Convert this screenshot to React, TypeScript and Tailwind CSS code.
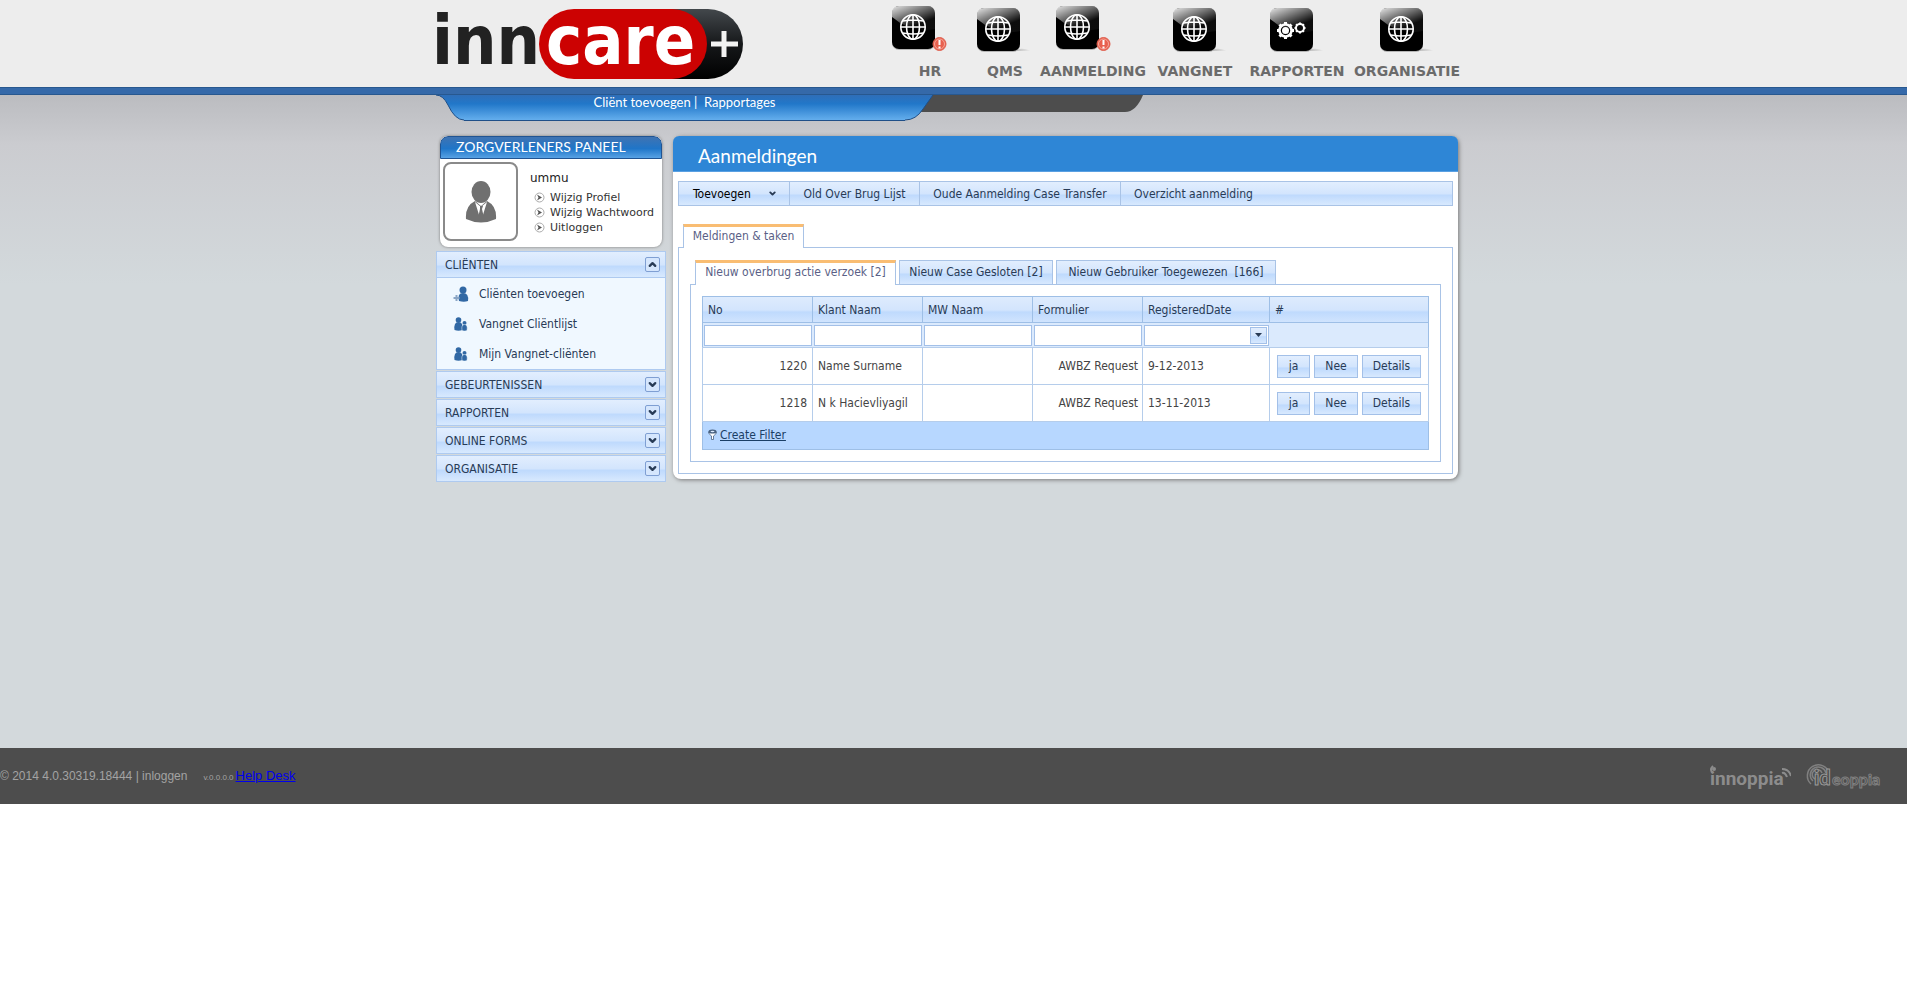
import React from "react";
import { ChevronDown, ChevronUp } from "lucide-react";

const navItems = [
  { label: "HR", icon: "globe", alert: true, width: "w-[80px]", pad: "pl-0.5" },
  { label: "QMS", icon: "globe", alert: false, width: "w-[70px]", pad: "pl-[7px]" },
  { label: "AANMELDING", icon: "globe", alert: true, width: "w-[106px]", pad: "pl-4" },
  { label: "VANGNET", icon: "globe", alert: false, width: "w-[98px]", pad: "pl-[27px]" },
  { label: "RAPPORTEN", icon: "gears", alert: false, width: "w-[106px]", pad: "pl-[26px]" },
  { label: "ORGANISATIE", icon: "globe", alert: false, width: "w-[114px]", pad: "pl-[30px]" },
];

const clientLinks = [
  { label: "Cliënten toevoegen", icon: "add" },
  { label: "Vangnet Cliëntlijst", icon: "group" },
  { label: "Mijn Vangnet-cliënten", icon: "group" },
];

const closedSections = ["GEBEURTENISSEN", "RAPPORTEN", "ONLINE FORMS", "ORGANISATIE"];

const columns = ["No", "Klant Naam", "MW Naam", "Formulier"];

const rows = [
  { no: "1220", klant: "Name Surname", mw: "", form: "AWBZ Request", date: "9-12-2013" },
  { no: "1218", klant: "N k Hacievliyagil", mw: "", form: "AWBZ Request", date: "13-11-2013" },
];

const glossy =
  "bg-[linear-gradient(to_bottom,#e2eefe_0%,#d3e5fd_50%,#bfdafd_58%,#d8e9fe_100%)]";

const Logo = () => (
  <svg width="318" height="84" viewBox="-8 0 318 84" className="-ml-2 shrink-0" role="img" aria-label="inncare+">
    <defs>
      <linearGradient id="pill" x1="0" y1="0" x2="0" y2="1">
        <stop offset="0" stopColor="#43484c" />
        <stop offset="0.5" stopColor="#16181a" />
        <stop offset="1" stopColor="#000" />
      </linearGradient>
    </defs>
    <rect x="160" y="9" width="147" height="70" rx="35" fill="url(#pill)" />
    <rect x="103" y="9" width="168" height="70" rx="35" fill="#cc0202" />
    <text x="-4" y="64" fontFamily="DejaVu Sans Condensed, sans-serif" fontWeight="700" fontSize="68" fill="#222">
      inn
    </text>
    <text x="110" y="64" fontFamily="DejaVu Sans Condensed, sans-serif" fontWeight="700" fontSize="68" fill="#fff">
      care
    </text>
    <path d="M288 31v26M275 44h27" stroke="#f2f2f2" strokeWidth="5" />
  </svg>
);

const gearTeeth = [0, 45, 90, 135];

const NavIcon = ({ kind, alert }: { kind: string; alert: boolean }) => (
  <svg width="56" height="46" viewBox="0 0 56 46" aria-hidden="true">
    <defs>
      <linearGradient id="gloss" x1="0" y1="0" x2="0.7" y2="1">
        <stop offset="0" stopColor="#fff" stopOpacity="0.9" />
        <stop offset="0.8" stopColor="#fff" stopOpacity="0.05" />
      </linearGradient>
      <linearGradient id="shade" x1="0" y1="0" x2="1" y2="0">
        <stop offset="0" stopColor="#999" stopOpacity="0.7" />
        <stop offset="1" stopColor="#999" stopOpacity="0" />
      </linearGradient>
    </defs>
    {!alert && <path d="M36 43h18q-6-3-12-2z" fill="url(#shade)" />}
    <rect x="0" y="1" width="43" height="43" rx="7" fill="#b5b5b5" />
    <rect x="0" y="0" width="43" height="43" rx="7" fill="#000" />
    <path d="M0 11V7q0-7 7-7h29q7 0 7 7v16Q20 28 0 11z" fill="url(#gloss)" />
    {kind === "globe" ? (
      <g fill="none" stroke="#fff" strokeWidth="1.6">
        <circle cx="21" cy="21" r="12.2" />
        <ellipse cx="21" cy="21" rx="6.5" ry="12.2" />
        <path d="M21 9v24M9 21h24M11 15q10-2 20 0M11 27q10 2 20 0" />
      </g>
    ) : (
      <g fill="none" stroke="#fff">
        <circle cx="15.500" cy="22.500" r="6" strokeWidth="2.500" />
        <circle cx="15.500" cy="22.500" r="3.500" fill="#fff" stroke="none" />
        {gearTeeth.map((a) => (
          <path key={a} d="M15.500 14v3M15.500 28v3" strokeWidth="3" transform={`rotate(${a} 15.500 22.500)`} />
        ))}
        <circle cx="30" cy="20" r="4" strokeWidth="2" />
        {gearTeeth.map((a) => (
          <path key={a} d="M30 14.500v2M30 23.500v2" strokeWidth="2" transform={`rotate(${a} 30 20)`} />
        ))}
      </g>
    )}
    {alert && (
      <g>
        <circle cx="47.500" cy="38" r="6.500" fill="#e8614f" stroke="#e0604f" />
        <circle cx="47.500" cy="38" r="5" fill="none" stroke="#f6a79b" />
        <path d="M47.500 34v5M47.500 40.500v2" stroke="#fff" strokeWidth="2" />
      </g>
    )}
  </svg>
);

const PersonIcon = ({ kind }: { kind: string }) =>
  kind === "add" ? (
    <svg width="17" height="17" viewBox="0 0 17 17" aria-hidden="true">
      <circle cx="10" cy="4" r="3.500" fill="#3168a4" />
      <path d="M6 15q-2-8 4-8t5 8q-4 1.500-9 0z" fill="#3168a4" />
      <path d="M3.500 9v6M0.500 12h6" stroke="#8aa5c5" strokeWidth="2" />
    </svg>
  ) : (
    <svg width="17" height="17" viewBox="0 0 17 17" aria-hidden="true">
      <circle cx="5.500" cy="4" r="2.800" fill="#3168a4" />
      <path d="M1.500 14q-1-8 4-8t4 8q-4 1.500-8 0z" fill="#3168a4" />
      <circle cx="11.500" cy="7" r="2" fill="#3168a4" />
      <path d="M9 14.500q-1-6 2.500-6t2.500 6q-2.500 1-5 0z" fill="#3168a4" stroke="#f0f8ff" strokeWidth="0.500" />
    </svg>
  );

const Avatar = () => (
  <svg width="32" height="42" viewBox="0 0 32 42" aria-hidden="true">
    <ellipse cx="16" cy="11" rx="9.500" ry="11" fill="#707070" />
    <path d="M1 38q-1-13 9-18l6 5 6-5q10 5 9 18-15 7-30 0z" fill="#707070" />
    <path d="M10 21l5 16 1-11 1 11 5-16-6 5z" fill="#fff" />
    <path d="M15 25h3l-1 3 2 9-3 3-3-3 2-9z" fill="#707070" />
  </svg>
);

const UserLink = ({ label }: { label: string }) => (
  <a href="#" className="flex h-[15px] items-center gap-[5px] text-[11px] text-[#333]">
    <svg width="11" height="11" viewBox="0 0 11 11" aria-hidden="true">
      <circle cx="5.500" cy="5.500" r="4.500" fill="#fff" stroke="#aaa" />
      <path d="M3 2.500l5 3-5 3 1.500-3z" fill="#555" />
    </svg>
    {label}
  </a>
);

const Header = () => (
  <header>
    <div className="h-[87px] bg-[#ededed]">
      <div className="mx-auto flex w-full max-w-[1035px] justify-between pr-[7px]">
        <Logo />
        <nav className="flex pt-1.5 font-['DejaVu_Sans',sans-serif]">
          {navItems.map((item) => (
            <a key={item.label} href="#" className={`${item.width} flex shrink-0 flex-col whitespace-nowrap`}>
              <span className={`${item.pad} ${item.alert ? "" : "pt-0.5"} flex h-[55px]`}>
                <NavIcon kind={item.icon} alert={item.alert} />
              </span>
              <span className="text-center text-sm leading-5 font-bold text-[#6b6b6b]">{item.label}</span>
            </a>
          ))}
        </nav>
      </div>
    </div>
    <div className="h-2 border-y border-[#28588f] bg-[#3569a9]" />
  </header>
);

const SubNav = () => (
  <div className="mx-auto flex w-full max-w-[1035px] items-start">
    <svg width="28" height="26" viewBox="0 0 28 26" className="shrink-0" aria-hidden="true">
      <defs>
        <linearGradient id="tab" x1="0" y1="0" x2="0" y2="1">
          <stop offset="0" stopColor="#2f6eb8" />
          <stop offset="0.35" stopColor="#2177c9" />
          <stop offset="1" stopColor="#64aeed" />
        </linearGradient>
      </defs>
      <path d="M0 0Q7 0 12 10Q19 25 28 25V0z" fill="url(#tab)" />
      <path d="M0 0Q7 0 12 10Q19 25 28 25" fill="none" stroke="#1f4f88" />
    </svg>
    <nav className="flex h-[26px] w-[441px] justify-center border-b border-[#1f4f88] bg-[linear-gradient(to_bottom,#2f6eb8_0%,#2177c9_35%,#64aeed_100%)] font-[Lato,sans-serif] text-[13px] leading-[14px] text-white">
      <a href="#">Cliënt toevoegen</a>
      <span className="whitespace-pre"> |  </span>
      <a href="#">Rapportages</a>
    </nav>
    <svg width="28" height="26" viewBox="0 0 28 26" className="shrink-0" aria-hidden="true">
      <path d="M14 0h14v17H14z" fill="#4d4d4d" />
      <path d="M0 0h28L18 14Q11 25 0 25z" fill="url(#tab)" />
      <path d="M28 0L18 14Q11 25 0 25" fill="none" stroke="#1f4f88" />
    </svg>
    <div className="h-[17px] w-[190px] bg-[#4d4d4d]" />
    <svg width="20" height="17" viewBox="0 0 20 17" aria-hidden="true">
      <path d="M0 0h20Q13 17 2 17H0z" fill="#4d4d4d" />
    </svg>
  </div>
);

const SectionHeader = ({ title, open }: { title: string; open?: boolean }) => (
  <button
    type="button"
    className={`flex h-[27px] w-full items-center justify-between border border-[#aecaf0] pr-[5px] pl-2 text-left text-[#283b56] ${glossy}`}
  >
    {title}
    <span className="flex size-[15px] items-center justify-center rounded-xs border border-[#7f9fd3] bg-[#d5e6fd]">
      {open ? <ChevronUp size={11} strokeWidth={5} /> : <ChevronDown size={11} strokeWidth={5} />}
    </span>
  </button>
);

const Sidebar = () => (
  <aside className="w-[230px] shrink-0">
    <section className="mx-1 h-[111px] overflow-hidden rounded-lg bg-white shadow-[0_0_3px_#777]">
      <h2 className="h-[23px] rounded-t-lg border border-[#205493] bg-[linear-gradient(to_bottom,#3f73b2_0%,#1f75c8_55%,#58a2e4_100%)] pl-[15px] font-[Lato,sans-serif] text-sm leading-5 text-white">
        ZORGVERLENERS PANEEL
      </h2>
      <div className="flex gap-3 pt-[3px] pl-[3px] font-['DejaVu_Sans',sans-serif]">
        <div className="flex h-[79px] w-[75px] shrink-0 items-center justify-center rounded-lg border-2 border-[#8a8a8a]">
          <Avatar />
        </div>
        <div className="pt-2">
          <p className="text-xs leading-4 text-[#222]">ummu</p>
          <div className="pt-1 pl-1 whitespace-nowrap">
            <UserLink label="Wijzig Profiel" />
            <UserLink label="Wijzig Wachtwoord" />
            <UserLink label="Uitloggen" />
          </div>
        </div>
      </div>
    </section>
    <div className="mt-1 flex flex-col gap-px">
      <div>
        <SectionHeader title="CLIËNTEN" open />
        <ul className="border border-t-0 border-[#aecaf0] bg-[#f0f8ff] pt-px">
          {clientLinks.map((link) => (
            <li key={link.label}>
              <a href="#" className="flex h-[30px] items-center gap-[9px] pl-4 text-[#283b56]">
                <PersonIcon kind={link.icon} />
                {link.label}
              </a>
            </li>
          ))}
        </ul>
      </div>
      {closedSections.map((title) => (
        <SectionHeader key={title} title={title} />
      ))}
    </div>
  </aside>
);

const Toolbar = () => (
  <div className={`flex h-[25px] border border-[#a9c3e6] text-[#283b56] ${glossy}`}>
    <button type="button" className="flex w-[111px] items-center justify-between border-r border-[#a9c3e6] pr-3 pl-3.5 text-black">
      Toevoegen
      <ChevronDown size={9} strokeWidth={5} className="text-[#283b56]" />
    </button>
    <button type="button" className="w-[130px] border-r border-[#a9c3e6]">Old Over Brug Lijst</button>
    <button type="button" className="w-[201px] border-r border-[#a9c3e6]">Oude Aanmelding Case Transfer</button>
    <button type="button" className="px-[13px]">Overzicht aanmelding</button>
  </div>
);

const TaskTable = () => (
  <table className="w-full table-fixed border-collapse border border-[#9ebfe6] text-left">
    <colgroup>
      <col className="w-[110px]" />
      <col className="w-[110px]" />
      <col className="w-[110px]" />
      <col className="w-[110px]" />
      <col className="w-[127px]" />
      <col />
    </colgroup>
    <thead className="text-[#283b56]">
      <tr className="h-[26px] bg-[linear-gradient(to_bottom,#deebfd_0%,#d3e5fd_50%,#bfdafd_58%,#d2e5fe_100%)]">
        {[...columns, "RegisteredDate", "#"].map((name) => (
          <th key={name} className="border border-[#9ebfe6] px-[5px] font-normal">{name}</th>
        ))}
      </tr>
      <tr className="h-[25px] border-y border-[#a9c3e6] bg-[#dbeafd]">
        {columns.map((name) => (
          <td key={name} className="p-px">
            <input aria-label={name} className="block h-[21px] w-full border border-[#a3c0e8] bg-white px-1" />
          </td>
        ))}
        <td className="p-px">
          <div className="flex h-[21px] items-center border border-[#a3c0e8] bg-white pr-px">
            <input aria-label="RegisteredDate" className="h-full w-0 grow px-1" />
            <button
              type="button"
              aria-label="Kies datum"
              className={`flex h-[17px] w-[17px] items-center justify-center border border-[#a3c0e8] ${glossy}`}
            >
              <svg width="7" height="4" viewBox="0 0 7 4" aria-hidden="true">
                <path d="M0 0h7L3.500 4z" fill="#283b56" />
              </svg>
            </button>
          </div>
        </td>
        <td />
      </tr>
    </thead>
    <tbody className="bg-white text-[#444]">
      {rows.map((row) => (
        <tr key={row.no} className="h-[37px]">
          <td className="border border-[#b5cdeb] px-[5px] text-right">{row.no}</td>
          <td className="border border-[#b5cdeb] px-[5px] whitespace-nowrap">{row.klant}</td>
          <td className="border border-[#b5cdeb] px-[5px]">{row.mw}</td>
          <td className="border border-[#b5cdeb] px-1 text-right whitespace-nowrap">{row.form}</td>
          <td className="border border-[#b5cdeb] px-[5px]">{row.date}</td>
          <td className="border border-[#b5cdeb] px-[7px]">
            <div className="flex gap-1 text-[#283b56]">
              <button type="button" className={`h-[23px] w-[33px] border border-[#a3c0e8] ${glossy}`}>ja</button>
              <button type="button" className={`h-[23px] w-11 border border-[#a3c0e8] ${glossy}`}>Nee</button>
              <button type="button" className={`h-[23px] w-[59px] border border-[#a3c0e8] ${glossy}`}>Details</button>
            </div>
          </td>
        </tr>
      ))}
    </tbody>
    <tfoot>
      <tr className="h-[28px] border border-[#9ebfe6] bg-[#b7d7ff]">
        <td colSpan={6} className="px-[5px] pb-0.5">
          <a href="#" className="flex items-center gap-[3px] text-[#1b3f66]">
            <svg width="9" height="11" viewBox="0 0 9 11" aria-hidden="true">
              <path d="M0.500 3q0 2 3 4v3.500h2V7q3-2 3-4z" fill="#fff" stroke="#46607f" strokeWidth="0.800" />
              <ellipse cx="4.500" cy="2.500" rx="4" ry="2" fill="#46607f" />
              <ellipse cx="4.500" cy="2.500" rx="2" ry="0.800" fill="#dbeafd" />
            </svg>
            <span className="underline">Create Filter</span>
          </a>
        </td>
      </tr>
    </tfoot>
  </table>
);

const Main = () => (
  <main className="w-[785px] min-w-0 rounded-lg bg-white pb-[5px] shadow-[1px_1px_4px_#777]">
    <h1 className="h-9 rounded-t-md border-b border-[#5aa0e2] bg-[#2e86d6] pl-[25px] font-[Lato,sans-serif] text-[19px] leading-10 text-white">
      Aanmeldingen
    </h1>
    <div className="px-[5px] pt-[9px]">
      <Toolbar />
      <div className="mt-[18px] flex pl-[5px]">
        <button type="button" className="-mb-px h-6 w-[121px] border-x border-t-3 border-x-[#a9c3e6] border-t-[#f9bd73] bg-white pb-1 text-[#5a5f86]">
          Meldingen &amp; taken
        </button>
      </div>
      <div className="border border-[#a9c3e6] px-[11px] pt-3 pb-[11px]">
        <div className="flex items-start gap-[3px] pl-[5px]">
          <button type="button" className="-mb-px h-[25px] w-[201px] border-x border-t-3 border-x-[#a9c3e6] border-t-[#f9bd73] bg-white pb-1 text-[#5a5f86]">
            Nieuw overbrug actie verzoek [2]
          </button>
          <button type="button" className={`h-6 w-[154px] border border-b-0 border-[#a9c3e6] pb-px text-[#283b56] ${glossy}`}>
            Nieuw Case Gesloten [2]
          </button>
          <button type="button" className={`h-6 w-[220px] border border-b-0 border-[#a9c3e6] pb-px whitespace-pre text-[#283b56] ${glossy}`}>
            {"Nieuw Gebruiker Toegewezen  [166]"}
          </button>
        </div>
        <div className="border border-[#a9c3e6] p-[11px]">
          <TaskTable />
        </div>
      </div>
    </div>
  </main>
);

const Footer = () => (
  <footer className="flex h-14 items-center justify-between bg-[#4d4d4d] pr-6 font-['Liberation_Sans',sans-serif] text-xs text-[#a3a3a3]">
    <p className="flex items-baseline">
      © 2014 4.0.30319.18444 | inloggen
      <span className="pr-0.5 pl-4 text-[8px]">v.0.0.0.0</span>
      <a href="#" className="text-[13px] text-[#0000ee] underline">Help Desk</a>
    </p>
    <div className="flex items-center gap-3.5">
      <svg width="82" height="30" viewBox="0 0 82 30" role="img" aria-label="innoppia">
        <path d="M4 5q-4 4 0 7" fill="none" stroke="#8c8c8c" strokeWidth="2" />
        <circle cx="5" cy="8" r="2" fill="#8c8c8c" />
        <text x="1" y="24" fontFamily="Roboto, sans-serif" fontSize="19" fontWeight="700" fill="#8c8c8c">
          innoppia
        </text>
        <path d="M73 12q3-1 5 4M73 8q7 0 9 7" fill="none" stroke="#8c8c8c" strokeWidth="2" />
      </svg>
      <svg width="78" height="34" viewBox="0 0 78 34" role="img" aria-label="ideoppia">
        <g fill="none" stroke="#808080" strokeWidth="1.500">
          <path d="M6 25A11 11 0 1 1 24 14" />
          <path d="M8 22A8 8 0 1 1 21 14" />
          <path d="M10 20A5 5 0 1 1 17 14" />
        </g>
        <text x="9" y="26" fontFamily="Lato, sans-serif" fontSize="20" fontWeight="900" fill="#4d4d4d" stroke="#9a9a9a">
          id
        </text>
        <text x="27" y="26" fontFamily="Lato, sans-serif" fontSize="16" fontWeight="700" fill="#4d4d4d" stroke="#808080">
          eoppia
        </text>
      </svg>
    </div>
  </footer>
);

export default function App() {
  return (
    <div className="min-h-screen bg-white font-['DejaVu_Sans_Condensed',sans-serif] text-xs leading-4">
      <Header />
      <div className="min-h-[653px] bg-[#d3d9dc] bg-[linear-gradient(to_bottom,#bbbcc0_0px,#cbccd0_50px,#d3d9dc_190px)]">
        <SubNav />
        <div className="mx-auto flex w-full max-w-[1035px] items-start gap-[7px] pt-[15px] pb-8">
          <Sidebar />
          <Main />
        </div>
      </div>
      <Footer />
    </div>
  );
}
